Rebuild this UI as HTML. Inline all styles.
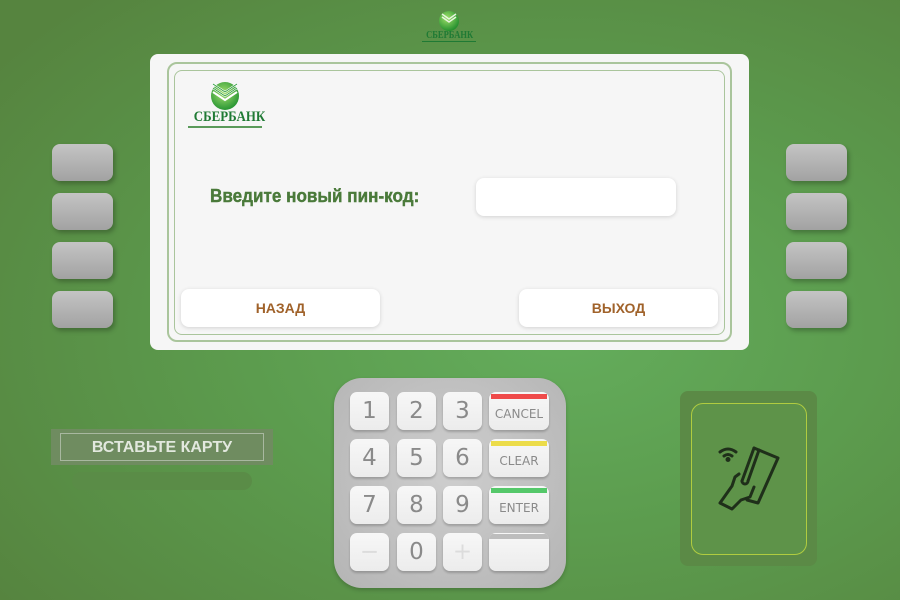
<!DOCTYPE html>
<html><head><meta charset="utf-8"><style>
*{margin:0;padding:0;box-sizing:border-box}
body{width:900px;height:600px;overflow:hidden;position:relative;font-family:"Liberation Sans",sans-serif;
background:radial-gradient(ellipse 700px 450px at 560px 330px,#64ad5c 0%,#5c9c4e 45%,#56843f 100%);}
.a{position:absolute}
.screen{left:150px;top:54px;width:599px;height:296px;background:#f6f6f6;border-radius:8px}
.b1{left:167px;top:62px;width:565px;height:280px;border:2px solid #aac59c;border-radius:10px}
.b2{left:174px;top:70px;width:551px;height:265px;border:1px solid #aac59c;border-radius:8px}
.side{width:61px;height:37px;border-radius:8px;background:linear-gradient(#c4c4c4,#a2a2a2);box-shadow:2px 3px 5px rgba(0,0,0,.25)}
.btn{background:#fff;border-radius:8px;box-shadow:0 1px 4px rgba(0,0,0,.15);color:#a0622a;font-weight:bold;font-size:14px;text-align:center;line-height:38px}
.key{background:linear-gradient(#f7f7f7,#ececec);border-radius:7px;box-shadow:0 2px 2px rgba(0,0,0,.2);color:#8a8a8a;font-family:"DejaVu Sans",sans-serif;font-size:23px;text-align:center;line-height:38px;width:39px;height:38px}
.fk{width:60px;height:38px;font-size:12px;line-height:44px;overflow:hidden}
.bar{position:absolute;left:2px;right:2px;top:2px;height:5px}
.logo{color:#1f7a34;font-family:"Liberation Serif",serif;font-weight:bold;text-align:center}
</style></head><body>
<svg class="a" style="left:437px;top:9px" width="24" height="22" viewBox="0 0 24 22"><defs><radialGradient id="g1" cx=".4" cy=".35" r=".7"><stop offset="0" stop-color="#9fe06a"/><stop offset="1" stop-color="#1c8a2a"/></radialGradient></defs><circle cx="12" cy="12" r="10" fill="url(#g1)"/><path d="M5 5l7 5 7-5M5 8l7 5 7-5" stroke="#e8f5e0" stroke-width="1.5" fill="none"/></svg>
<div class="a logo" style="left:422px;top:30px;width:54px;font-size:10px;border-bottom:1px solid #1f7a34;line-height:11px"><span style="display:inline-block;transform:scaleX(.85)">СБЕРБАНК</span></div>

<div class="a screen"></div>
<div class="a b1"></div>
<div class="a b2"></div>
<svg class="a" style="left:209px;top:81px" width="32" height="30" viewBox="0 0 32 30"><defs><radialGradient id="g2" cx=".45" cy=".4" r=".7"><stop offset="0" stop-color="#a6e070"/><stop offset="1" stop-color="#148a2a"/></radialGradient></defs><circle cx="16" cy="15" r="14" fill="url(#g2)"/><path d="M4 3l12 8 12-8M4 7l12 8 12-8M4 11l12 8 12-8" stroke="#fff" stroke-width="2" fill="none"/><path d="M4 3l12 8 12-8M4 7l12 8 12-8" stroke="#2a9a3a" stroke-width="0.8" fill="none"/></svg>
<div class="a logo" style="left:188px;top:110px;width:74px;font-size:15px;line-height:15px;border-bottom:2px solid #5a9a5a;padding-bottom:1px;white-space:nowrap"><span style="display:inline-block;transform:scaleX(.86)">СБЕРБАНК</span></div>

<div class="a" style="left:210px;top:186px;font-size:18px;font-weight:700;color:#4a7a3a;-webkit-text-stroke:0.4px #4a7a3a;transform:scaleX(.95);transform-origin:left">Введите новый пин-код:</div>
<div class="a" style="left:476px;top:178px;width:200px;height:38px;background:#fff;border-radius:8px;box-shadow:0 1px 4px rgba(0,0,0,.15)"></div>
<div class="a btn" style="left:181px;top:289px;width:199px;height:38px">НАЗАД</div>
<div class="a btn" style="left:519px;top:289px;width:199px;height:38px">ВЫХОД</div>

<div class="a side" style="left:52px;top:144px"></div>
<div class="a side" style="left:52px;top:193px"></div>
<div class="a side" style="left:52px;top:242px"></div>
<div class="a side" style="left:52px;top:291px"></div>
<div class="a side" style="left:786px;top:144px"></div>
<div class="a side" style="left:786px;top:193px"></div>
<div class="a side" style="left:786px;top:242px"></div>
<div class="a side" style="left:786px;top:291px"></div>

<div class="a" style="left:51px;top:429px;width:222px;height:36px;background:#6f8c60"></div>
<div class="a" style="left:60px;top:433px;width:204px;height:28px;border:1px solid #a8b8a0;color:#e2e8de;font-weight:bold;font-size:16px;text-align:center;line-height:28px">ВСТАВЬТЕ КАРТУ</div>
<div class="a" style="left:72px;top:472px;width:180px;height:18px;border-radius:9px;background:#5a8c47"></div>

<div class="a" style="left:334px;top:378px;width:232px;height:210px;border-radius:28px;background:radial-gradient(ellipse at 50% 45%,#cecece,#b4b4b4);box-shadow:0 2px 4px rgba(0,0,0,.2)"></div>
<div class="a key" style="left:350px;top:392px">1</div>
<div class="a key" style="left:397px;top:392px">2</div>
<div class="a key" style="left:443px;top:392px">3</div>
<div class="a key fk" style="left:489px;top:392px"><div class="bar" style="background:#ef4a4a"></div>CANCEL</div>
<div class="a key" style="left:350px;top:439px">4</div>
<div class="a key" style="left:397px;top:439px">5</div>
<div class="a key" style="left:443px;top:439px">6</div>
<div class="a key fk" style="left:489px;top:439px"><div class="bar" style="background:#ecdc4a"></div>CLEAR</div>
<div class="a key" style="left:350px;top:486px">7</div>
<div class="a key" style="left:397px;top:486px">8</div>
<div class="a key" style="left:443px;top:486px">9</div>
<div class="a key fk" style="left:489px;top:486px"><div class="bar" style="background:#55c86a"></div>ENTER</div>
<div class="a key" style="left:350px;top:533px;color:#dcdcdc">−</div>
<div class="a key" style="left:397px;top:533px">0</div>
<div class="a key" style="left:443px;top:533px;color:#dcdcdc">+</div>
<div class="a key fk" style="left:489px;top:533px"><div class="bar" style="background:#bdbdbd;left:0;right:0;top:1px"></div></div>

<div class="a" style="left:680px;top:391px;width:137px;height:175px;border-radius:8px;background:#5b8a46"></div>
<div class="a" style="left:691px;top:403px;width:116px;height:152px;border-radius:12px;border:1px solid #b0cc40;background:#5e9349"></div>
<svg class="a" style="left:715px;top:445px" width="66" height="66" viewBox="0 0 66 66" fill="none" stroke="#1f2f1a" stroke-width="3" stroke-linecap="round" stroke-linejoin="round">
<path d="M5 7q8-6 16 0M9 11q4-3 8 0"/><circle cx="13" cy="14.5" r="1" fill="#1f2f1a"/>
<path d="M39 3l24 10-20 45-11-3"/>
<path d="M39 3l-12 33M44 5l-11 31"/>
<path d="M27 36a3 3 0 0 0 6 0"/>
<path d="M24 29l-4 3-3 9-12 17 12 6 9-9 9-3 4-10"/>
</svg>
</body></html>
